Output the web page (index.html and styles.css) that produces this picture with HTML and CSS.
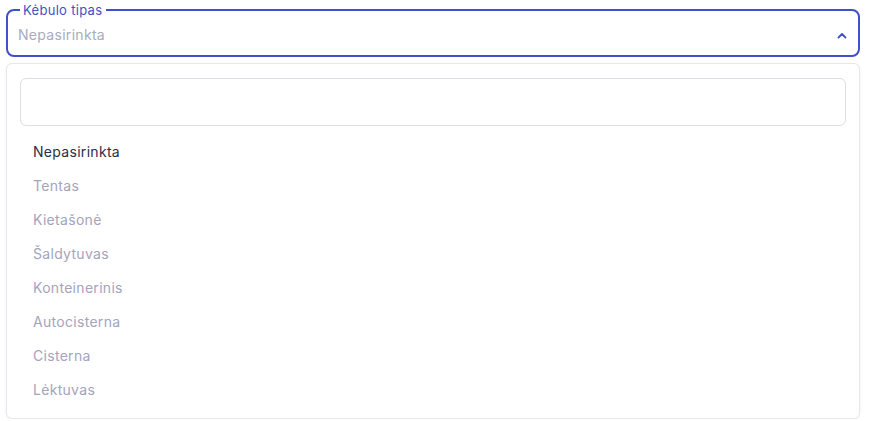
FILE: index.html
```html
<!DOCTYPE html>
<html lang="lt">
<head>
<meta charset="utf-8">
<title>Kėbulo tipas</title>
<link rel="stylesheet" href="styles.css">
</head>
<body>
<div class="select">
  <fieldset class="field">
    <legend class="field-label">Kėbulo tipas</legend>
    <div class="field-row">
      <span class="field-value">Nepasirinkta</span>
      <svg class="chevron" width="10" height="7" viewBox="0 0 10 7" aria-hidden="true">
        <path d="M1.5 5.5 L5 2 L8.5 5.5" fill="none" stroke="#3f51c8" stroke-width="1.8" stroke-linecap="round" stroke-linejoin="round"/>
      </svg>
    </div>
  </fieldset>
  <div class="panel">
    <input class="search" type="text" aria-label="Paieška">
    <ul class="options">
      <li class="option selected">Nepasirinkta</li>
      <li class="option">Tentas</li>
      <li class="option">Kietašonė</li>
      <li class="option">Šaldytuvas</li>
      <li class="option">Konteinerinis</li>
      <li class="option">Autocisterna</li>
      <li class="option">Cisterna</li>
      <li class="option">Lėktuvas</li>
    </ul>
  </div>
</div>
</body>
</html>
```
FILE: styles.css
```css
* { box-sizing: border-box; }
html, body { margin: 0; padding: 0; background: #ffffff; }
body {
  font-family: "Inter", "Noto Sans", sans-serif;
  font-size: 14px;
  letter-spacing: 0.3px;
  color: #2b2d42;
}
.select {
  padding: 2px 9px 0 6px;
}
.field {
  margin: 0;
  border: 2px solid #3f51c8;
  border-radius: 8px;
  padding: 7px 11px 10px 10px;
  min-width: 0;
}
.field-label {
  margin-left: 2px;
  padding: 0 4px 0 3px;
  font-size: 13px;
  line-height: 16px;
  color: #3f51c8;
}
.field-row {
  display: flex;
  align-items: center;
  justify-content: space-between;
  height: 20px;
}
.field-value {
  color: #a8acbd;
  font-size: 14px;
  line-height: 20px;
}
.chevron { display: block; margin-top: 1px; }
.panel {
  margin-top: 6px;
  border: 1px solid #e6e6ec;
  border-radius: 6px;
  box-shadow: 0 1px 3px rgba(20, 20, 40, 0.06);
  padding: 14px 13px 11px 13px;
}
.search {
  display: block;
  width: 100%;
  height: 48px;
  border: 1px solid #dedee4;
  border-radius: 6px;
  background: #ffffff;
  outline: none;
  font: inherit;
  padding: 0 12px;
}
.options {
  list-style: none;
  margin: 9px 0 0 0;
  padding: 0;
}
.option {
  height: 34px;
  line-height: 34px;
  padding-left: 13px;
  color: #a4a4bc;
  font-size: 14px;
}
.option.selected { color: #2e2d48; }
```
